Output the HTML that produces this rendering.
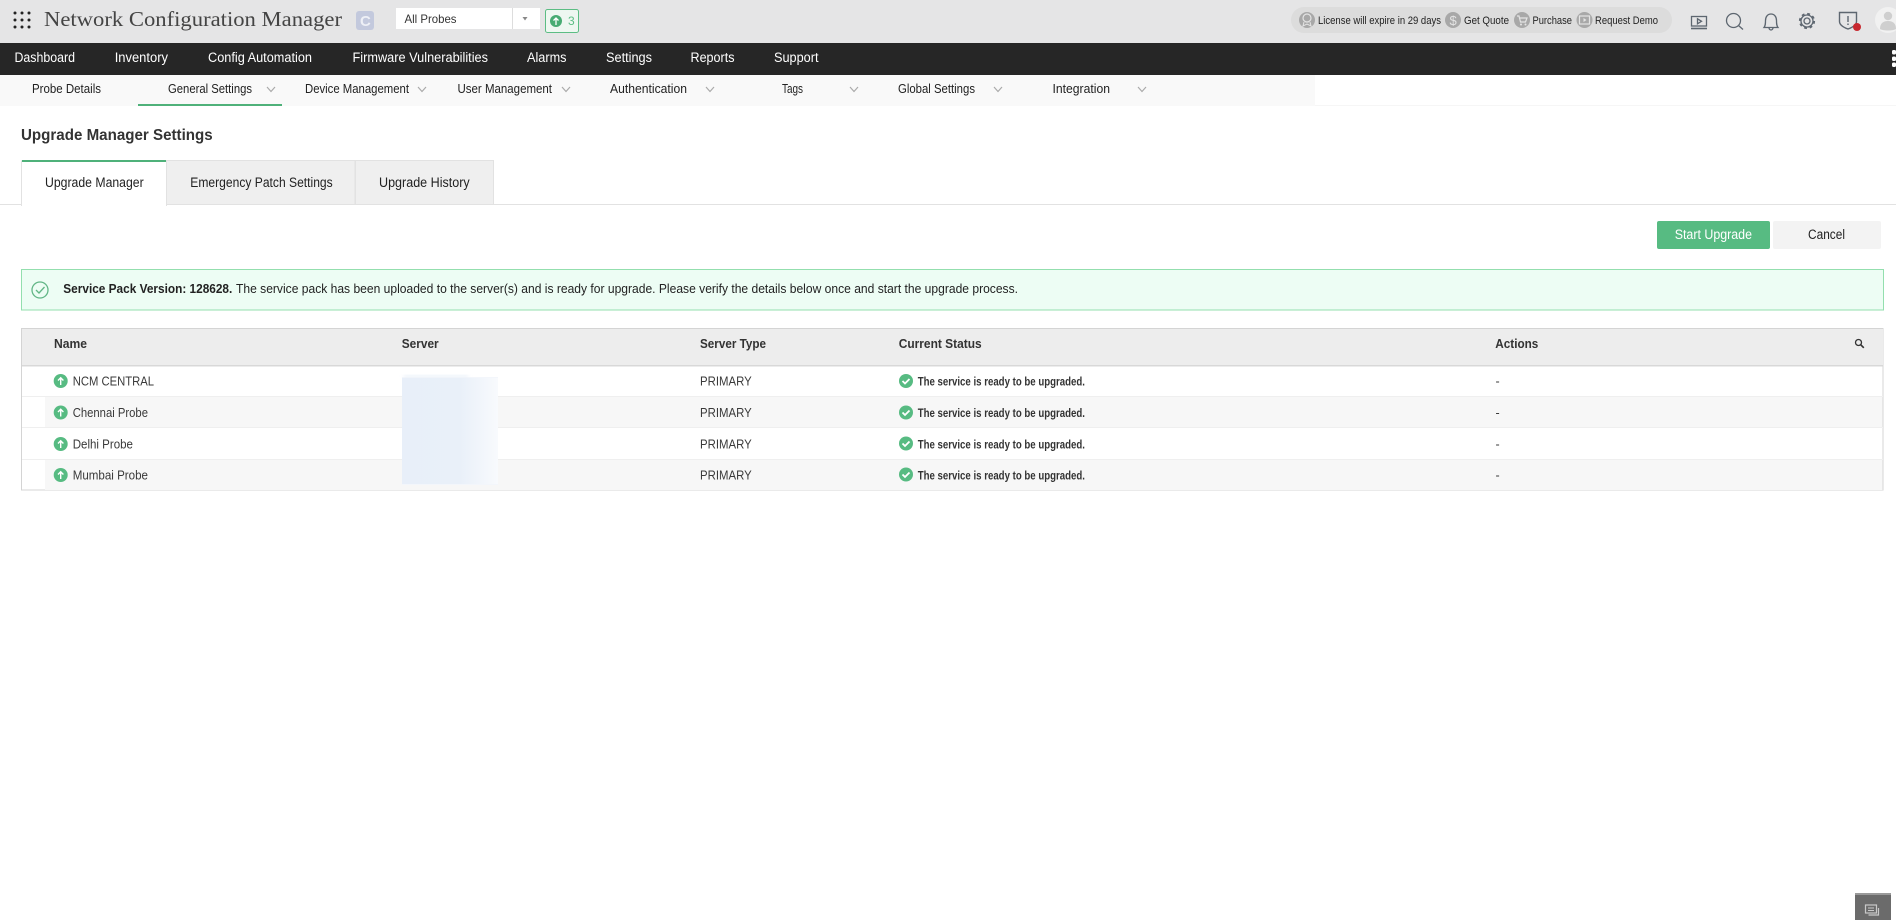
<!DOCTYPE html>
<html lang="en">
<head>
<meta charset="utf-8">
<title>Network Configuration Manager</title>
<style>
html,body{margin:0;padding:0;width:1896px;height:920px;overflow:hidden;background:#fff}
svg{display:block;position:absolute;left:0;top:0}
text{font-family:"Liberation Sans",sans-serif;font-size:13px;fill:#222}
.nav text{fill:#fff;font-size:13.5px}
.sub text{fill:#222;font-size:12.5px}
.top text{fill:#222;font-size:11px}
.th text{font-size:13px;fill:#333;font-weight:700;stroke:none}
.td text{font-size:12.5px;fill:#3a3a3a}
.td .st{font-size:11.5px;font-weight:700;fill:#333}
.tab text{font-size:13.5px;fill:#222}
</style>
</head>
<body>
<svg width="1896" height="920" viewBox="0 0 1896 920" xmlns="http://www.w3.org/2000/svg">
<defs>
<linearGradient id="g" x1="0" y1="0" x2="1" y2="0"><stop offset="0" stop-color="#e8eff9"/><stop offset=".6" stop-color="#e9f0f9"/><stop offset="1" stop-color="#f8fafd"/></linearGradient>
<filter id="b" x="-20%" y="-20%" width="140%" height="140%"><feGaussianBlur stdDeviation="2"/></filter>
</defs>

<!-- header -->
<rect x="0" y="0" width="1896" height="43" fill="#e5e5e6"/>
<g fill="#222">
<circle cx="15" cy="13" r="1.5"/><circle cx="22" cy="13" r="1.5"/><circle cx="29" cy="13" r="1.5"/>
<circle cx="15" cy="20" r="1.5"/><circle cx="22" cy="20" r="1.5"/><circle cx="29" cy="20" r="1.5"/>
<circle cx="15" cy="27" r="1.5"/><circle cx="22" cy="27" r="1.5"/><circle cx="29" cy="27" r="1.5"/>
</g>
<text x="44" y="26" textLength="298" lengthAdjust="spacingAndGlyphs" style="font-family:'Liberation Serif',serif;font-size:21px;fill:#444">Network Configuration Manager</text>
<rect x="356" y="11" width="18" height="19" rx="3" fill="#c3c9dd"/>
<text x="360" y="26" style="font-size:15px;font-weight:700;fill:#eef0f6">C</text>
<rect x="396" y="8" width="144" height="21" fill="#fff"/>
<rect x="512" y="8" width="1" height="21" fill="#ddd"/>
<text x="404.500" y="23" textLength="52" lengthAdjust="spacingAndGlyphs" style="font-size:12px;fill:#333">All Probes</text>
<path d="M522.500 17h5l-2.500 3.500z" fill="#888"/>
<rect x="545.500" y="9.500" width="33" height="23" rx="2" fill="#eef7f1" stroke="#5cbd84"/>
<circle cx="556" cy="21" r="6" fill="#48ab73"/>
<path d="M556 25v-7M553.500 20.500l2.500-2.500 2.500 2.500" fill="none" stroke="#fff" stroke-width="1.300"/>
<text x="568" y="25" style="font-size:12px;fill:#5cbd84">3</text>

<g class="top">
<rect x="1291" y="7" width="381" height="26" rx="13" fill="#dcdcdc"/>
<circle cx="1307" cy="20" r="8" fill="#a8a8a8"/><circle cx="1307" cy="18" r="4" fill="none" stroke="#e4e4e4" stroke-width="1.200"/><path d="M1304 22l-1 4 4-2 4 2-1-4" fill="none" stroke="#e4e4e4"/>
<text x="1318" y="24" textLength="123" lengthAdjust="spacingAndGlyphs">License will expire in 29 days</text>
<circle cx="1453" cy="20" r="8" fill="#a8a8a8"/>
<text x="1449.500" y="25" style="font-size:13px;fill:#e4e4e4">$</text>
<text x="1464" y="24" textLength="45" lengthAdjust="spacingAndGlyphs">Get Quote</text>
<circle cx="1522" cy="20" r="8" fill="#a8a8a8"/><path d="M1517 16h2l1.500 6h5l1.500-4h-7.500" fill="none" stroke="#e4e4e4" stroke-width="1.200"/><circle cx="1521" cy="24.500" r="1" fill="#e4e4e4"/><circle cx="1525.500" cy="24.500" r="1" fill="#e4e4e4"/>
<text x="1532.500" y="24" textLength="39.500" lengthAdjust="spacingAndGlyphs">Purchase</text>
<circle cx="1584.500" cy="20" r="8" fill="#a8a8a8"/><rect x="1579.500" y="16" width="10" height="8" fill="none" stroke="#e4e4e4" stroke-width="1.200"/><path d="M1583.500 18v4l3-2z" fill="#e4e4e4"/>
<text x="1595" y="24" textLength="63" lengthAdjust="spacingAndGlyphs">Request Demo</text>
</g>

<g fill="none" stroke="#5d6670" stroke-width="1.300">
<rect x="1691.500" y="16.500" width="15" height="9.500"/><path d="M1691 28.500h16" stroke-width="1.600"/><path d="M1697.500 18.800v5l4-2.500z"/>
<circle cx="1733.500" cy="20.500" r="7"/><path d="M1738.500 25.500l4.500 4"/>
<path d="M1764 27.500c1.500-2 1.500-4 1.500-7 0-3.800 2.200-6.500 5.500-6.500s5.500 2.700 5.500 6.500c0 3 0 5 1.500 7z"/><path d="M1769 27.500c0 3.300 4 3.300 4 0"/>
<circle cx="1807" cy="21" r="3"/><circle cx="1807" cy="21" r="6"/>
<circle cx="1807" cy="21" r="7.300" stroke-width="1.600" stroke-dasharray="2.900 2.830"/>
<path d="M1839.500 12.500h17v9c0 3-3 5.500-8.500 7.500-5.500-2-8.500-4.500-8.500-7.500z" stroke-width="1.400"/><path d="M1848 16v6M1848 23.500v1.500" stroke-width="1.400"/>
</g>
<circle cx="1857" cy="27" r="4" fill="#c8282f"/>
<circle cx="1888" cy="20" r="13" fill="#f1f1f1"/>
<circle cx="1888" cy="16" r="4.200" fill="#cfcfcf"/>
<path d="M1880 29c0-6 3.500-8 8-8s8 2 8 8c-3 2-13 2-16 0z" fill="#cfcfcf"/>

<!-- nav -->
<rect x="0" y="43" width="1896" height="32" fill="#262626"/>
<g class="nav">
<text x="14.500" y="62" textLength="60.500" lengthAdjust="spacingAndGlyphs">Dashboard</text>
<text x="114.700" y="62" textLength="53.300" lengthAdjust="spacingAndGlyphs">Inventory</text>
<text x="208" y="62" textLength="104" lengthAdjust="spacingAndGlyphs">Config Automation</text>
<text x="352.500" y="62" textLength="135.500" lengthAdjust="spacingAndGlyphs">Firmware Vulnerabilities</text>
<text x="527" y="62" textLength="39.500" lengthAdjust="spacingAndGlyphs">Alarms</text>
<text x="606" y="62" textLength="46" lengthAdjust="spacingAndGlyphs">Settings</text>
<text x="690.500" y="62" textLength="44" lengthAdjust="spacingAndGlyphs">Reports</text>
<text x="774" y="62" textLength="44.500" lengthAdjust="spacingAndGlyphs">Support</text>
</g>
<g fill="#fff"><rect x="1892" y="50" width="4" height="4.500" rx="1.500"/><rect x="1892" y="56.500" width="4" height="4.500" rx="1.500"/><rect x="1892" y="62.500" width="4" height="4.500" rx="1.500"/></g>

<!-- sub nav -->
<rect x="0" y="75" width="1315" height="31" fill="#f9f9f9"/>
<rect x="1315" y="105" width="581" height="1" fill="#f6f6f6"/>
<rect x="138" y="104" width="144" height="2" fill="#4fb17a"/>
<g class="sub">
<text x="32" y="93" textLength="69" lengthAdjust="spacingAndGlyphs">Probe Details</text>
<text x="168" y="93" textLength="84" lengthAdjust="spacingAndGlyphs">General Settings</text>
<text x="305" y="93" textLength="104" lengthAdjust="spacingAndGlyphs">Device Management</text>
<text x="457.500" y="93" textLength="94.500" lengthAdjust="spacingAndGlyphs">User Management</text>
<text x="610" y="93" textLength="77" lengthAdjust="spacingAndGlyphs">Authentication</text>
<text x="782" y="93" textLength="21" lengthAdjust="spacingAndGlyphs">Tags</text>
<text x="898" y="93" textLength="77" lengthAdjust="spacingAndGlyphs">Global Settings</text>
<text x="1052.500" y="93" textLength="57.500" lengthAdjust="spacingAndGlyphs">Integration</text>
</g>
<g fill="none" stroke="#aaa" stroke-width="1.200">
<path d="M267 87l4 4.500 4-4.500"/><path d="M418 87l4 4.500 4-4.500"/><path d="M562 87l4 4.500 4-4.500"/><path d="M706 87l4 4.500 4-4.500"/><path d="M850 87l4 4.500 4-4.500"/><path d="M994 87l4 4.500 4-4.500"/><path d="M1138 87l4 4.500 4-4.500"/>
</g>

<!-- page title -->
<text x="21" y="140" textLength="191.700" lengthAdjust="spacingAndGlyphs" style="font-size:15.500px;font-weight:700;fill:#333">Upgrade Manager Settings</text>

<!-- tabs -->
<g class="tab">
<rect x="0" y="204" width="1896" height="1" fill="#e2e2e2"/>
<rect x="166.500" y="160.500" width="188.500" height="44" fill="#efefef" stroke="#e2e2e2"/>
<rect x="355.500" y="160.500" width="138" height="44" fill="#efefef" stroke="#e2e2e2"/>
<rect x="21.500" y="161" width="145" height="44.500" fill="#fff" stroke="#e2e2e2"/>
<rect x="22" y="205" width="144" height="1" fill="#fff"/>
<rect x="22" y="160" width="144" height="2" fill="#4fb17a"/>
<text x="45" y="187" textLength="98.700" lengthAdjust="spacingAndGlyphs">Upgrade Manager</text>
<text x="190.300" y="187" textLength="142.400" lengthAdjust="spacingAndGlyphs">Emergency Patch Settings</text>
<text x="379" y="187" textLength="90.700" lengthAdjust="spacingAndGlyphs">Upgrade History</text>
</g>

<!-- buttons -->
<rect x="1657" y="221" width="113" height="28" rx="2" fill="#57bb82"/>
<text x="1674.700" y="239" textLength="77.300" lengthAdjust="spacingAndGlyphs" style="font-size:13.500px;fill:#fff">Start Upgrade</text>
<rect x="1773" y="221" width="108" height="28" rx="2" fill="#f3f3f3"/>
<text x="1808" y="239" textLength="37" lengthAdjust="spacingAndGlyphs" style="font-size:13.500px;fill:#222">Cancel</text>

<!-- alert -->
<rect x="21.500" y="269.500" width="1862" height="40.500" fill="#edfdf4" stroke="#93dfae"/>
<circle cx="40" cy="290" r="8" fill="none" stroke="#62b686" stroke-width="1.300"/>
<path d="M36 290l3 3 5.500-6" fill="none" stroke="#62b686" stroke-width="1.300"/>
<text x="63.300" y="293" textLength="169" lengthAdjust="spacingAndGlyphs" style="font-size:13px;font-weight:700;fill:#222">Service Pack Version: 128628.</text>
<text x="236" y="293" textLength="782" lengthAdjust="spacingAndGlyphs" style="font-size:13px;fill:#222">The service pack has been uploaded to the server(s) and is ready for upgrade. Please verify the details below once and start the upgrade process.</text>

<!-- table -->
<rect x="21.500" y="328.500" width="1861.500" height="161.500" fill="#fff" stroke="#d4d4d4"/>
<rect x="22" y="329" width="1861" height="36" fill="#ededed"/>
<rect x="22" y="365" width="1861" height="1.500" fill="#d8d8d8"/>
<rect x="45" y="397" width="1837.500" height="30" fill="#f7f7f7"/>
<rect x="45" y="460" width="1837.500" height="30" fill="#f7f7f7"/>
<rect x="22" y="396" width="1861" height="1" fill="#efefef"/>
<rect x="22" y="427" width="1861" height="1" fill="#efefef"/>
<rect x="22" y="459" width="1861" height="1" fill="#efefef"/>
<g class="th">
<text x="54" y="348" textLength="33" lengthAdjust="spacingAndGlyphs">Name</text>
<text x="401.700" y="348" textLength="37" lengthAdjust="spacingAndGlyphs">Server</text>
<text x="700" y="348" textLength="66" lengthAdjust="spacingAndGlyphs">Server Type</text>
<text x="898.700" y="348" textLength="83" lengthAdjust="spacingAndGlyphs">Current Status</text>
<text x="1495.300" y="348" textLength="43" lengthAdjust="spacingAndGlyphs">Actions</text>
</g>
<circle cx="1858.500" cy="342.500" r="3" fill="none" stroke="#333" stroke-width="1.300"/>
<path d="M1860.800 344.800l3 3" stroke="#333" stroke-width="1.600"/>

<g class="td">
<g fill="#57bb82">
<circle cx="60.700" cy="381" r="7"/><circle cx="60.700" cy="412.500" r="7"/><circle cx="60.700" cy="444" r="7"/><circle cx="60.700" cy="475" r="7"/>
</g>
<g fill="none" stroke="#fff" stroke-width="1.400">
<path d="M60.700 385v-7M58 380.500l2.700-2.700 2.700 2.700"/><path d="M60.700 416.500v-7M58 412l2.700-2.700 2.700 2.700"/><path d="M60.700 448v-7M58 443.500l2.700-2.700 2.700 2.700"/><path d="M60.700 479v-7M58 474.500l2.700-2.700 2.700 2.700"/>
</g>
<text x="72.700" y="385.500" textLength="81.300" lengthAdjust="spacingAndGlyphs">NCM CENTRAL</text>
<text x="72.700" y="417" textLength="75.300" lengthAdjust="spacingAndGlyphs">Chennai Probe</text>
<text x="72.700" y="448.500" textLength="60.300" lengthAdjust="spacingAndGlyphs">Delhi Probe</text>
<text x="72.700" y="479.500" textLength="75.300" lengthAdjust="spacingAndGlyphs">Mumbai Probe</text>

<text x="700" y="385.500" textLength="51.700" lengthAdjust="spacingAndGlyphs">PRIMARY</text>
<text x="700" y="417" textLength="51.700" lengthAdjust="spacingAndGlyphs">PRIMARY</text>
<text x="700" y="448.500" textLength="51.700" lengthAdjust="spacingAndGlyphs">PRIMARY</text>
<text x="700" y="479.500" textLength="51.700" lengthAdjust="spacingAndGlyphs">PRIMARY</text>

<g fill="#57bb82">
<circle cx="906" cy="381" r="7"/><circle cx="906" cy="412.500" r="7"/><circle cx="906" cy="443.500" r="7"/><circle cx="906" cy="474.500" r="7"/>
</g>
<g fill="none" stroke="#fff" stroke-width="1.800">
<path d="M902.500 381l2.500 2.500 4.500-4.500"/><path d="M902.500 412.500l2.500 2.500 4.500-4.500"/><path d="M902.500 443.500l2.500 2.500 4.500-4.500"/><path d="M902.500 474.500l2.500 2.500 4.500-4.500"/>
</g>
<text class="st" x="917.700" y="385.500" textLength="167.300" lengthAdjust="spacingAndGlyphs">The service is ready to be upgraded.</text>
<text class="st" x="917.700" y="417" textLength="167.300" lengthAdjust="spacingAndGlyphs">The service is ready to be upgraded.</text>
<text class="st" x="917.700" y="448.500" textLength="167.300" lengthAdjust="spacingAndGlyphs">The service is ready to be upgraded.</text>
<text class="st" x="917.700" y="479.500" textLength="167.300" lengthAdjust="spacingAndGlyphs">The service is ready to be upgraded.</text>

<text x="1495.500" y="385.500">-</text>
<text x="1495.500" y="417">-</text>
<text x="1495.500" y="448.500">-</text>
<text x="1495.500" y="479.500">-</text>
</g>

<!-- blurred server column -->
<rect x="402" y="377" width="96" height="108" fill="#f3f6fb"/>
<rect x="402" y="378" width="96" height="106" fill="url(#g)"/>
<rect x="404" y="375" width="64" height="2" fill="#dfe9f6" filter="url(#b)"/>

<!-- chat button -->
<rect x="1855" y="894" width="36" height="26" fill="#6b6b6b"/>
<rect x="1855" y="893" width="36" height="2" fill="#9a9a9a"/>
<rect x="1865.500" y="905" width="11" height="8" fill="none" stroke="#c9c9c9" stroke-width="1.200"/>
<path d="M1878.500 908v7h-10" fill="none" stroke="#c9c9c9" stroke-width="1.200"/>
<path d="M1868 908h6M1868 910.500h6" stroke="#c9c9c9"/>
</svg>
</body>
</html>
